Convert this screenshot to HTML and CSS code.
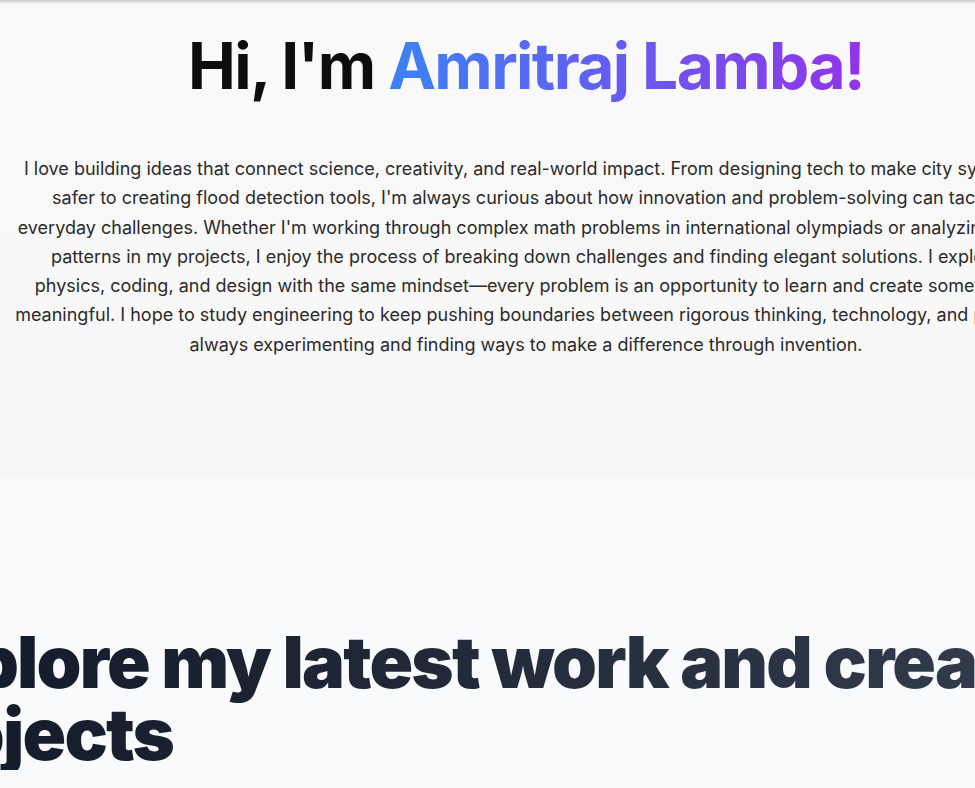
FILE: index.html
```html
<!DOCTYPE html>
<html lang="en">
<head>
  <meta charset="UTF-8">
  <meta name="viewport" content="width=device-width, initial-scale=1.0">
  <title>Amritraj Lamba</title>
  <link rel="stylesheet" href="styles.css">
</head>
<body>
  <div class="top-shade"></div>

  <!-- Intro -->
  <section class="hero">
    <h1 class="hero-title">Hi, I'm <span class="name">Amritraj Lamba!</span></h1>
    <p class="hero-text">
      I love building ideas that connect science, creativity, and real-world impact. From designing tech to make city systems
      safer to creating flood detection tools, I'm always curious about how innovation and problem-solving can tackle
      everyday challenges. Whether I'm working through complex math problems in international olympiads or analyzing data
      patterns in my projects, I enjoy the process of breaking down challenges and finding elegant solutions. I explore
      physics, coding, and design with the same mindset—every problem is an opportunity to learn and create something
      meaningful. I hope to study engineering to keep pushing boundaries between rigorous thinking, technology, and people,
      always experimenting and finding ways to make a difference through invention.
    </p>
  </section>

  <!-- Projects -->
  <section class="projects">
    <h2 class="projects-title">Explore my latest work and creative projects</h2>
  </section>
</body>
</html>
```

FILE: styles.css
```css
* {
  box-sizing: border-box;
}

body {
  margin: 0;
  width: 1052px;
  background-color: #f8fafc;
  font-family: Inter, "Noto Sans", sans-serif;
  overflow: hidden;
}

.top-shade {
  height: 4px;
  background: linear-gradient(to bottom, #c9c9c9, #f9f9f9);
}

.hero {
  padding: 30px 0 119px;
  background: linear-gradient(to bottom, #f9f9f9, #f7f7f7);
  text-align: center;
}

.hero-title {
  margin: 0 0 56px;
  font-size: 64px;
  font-weight: 700;
  line-height: 1;
  letter-spacing: -0.025em;
  color: #0d0d0d;
}

.name {
  background: linear-gradient(to right, #3b82f6, #9333ea);
  -webkit-background-clip: text;
  background-clip: text;
  color: transparent;
}

.hero-text {
  max-width: 1024px;
  margin: 0 auto;
  font-size: 18px;
  line-height: 1.625;
  color: #2b2b2b;
}

.projects {
  padding: 148px 0 40px;
}

.projects-title {
  width: 1300px;
  margin: 0 0 0 -112px;
  font-size: 72px;
  font-weight: 900;
  line-height: 1;
  letter-spacing: -0.025em;
  background: linear-gradient(to right, #111827, #374151);
  -webkit-background-clip: text;
  background-clip: text;
  color: transparent;
}
```
